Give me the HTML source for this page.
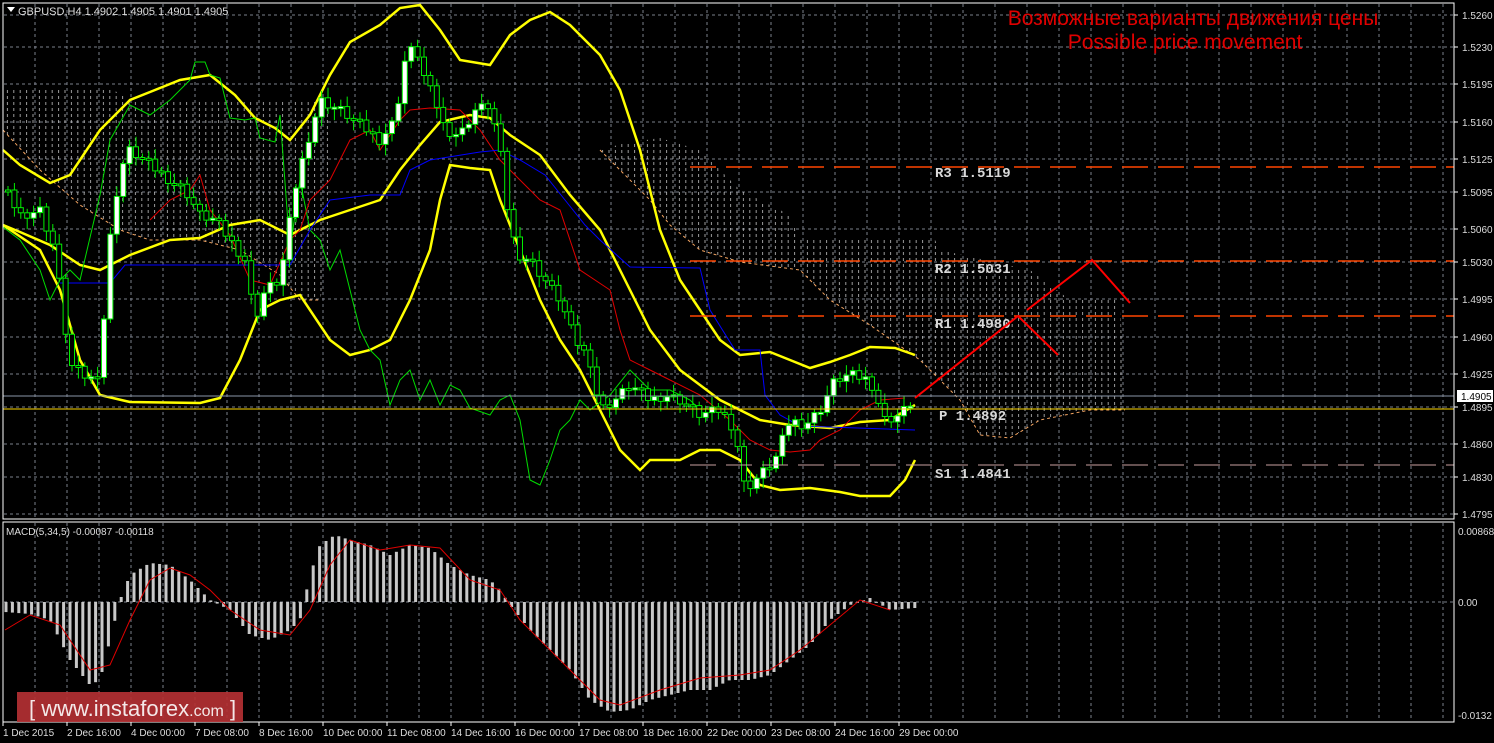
<!DOCTYPE html>
<html><head><meta charset="utf-8"><style>
html,body{margin:0;padding:0;background:#000;width:1494px;height:743px;overflow:hidden}
svg{display:block}
</style></head><body>
<svg id="s" width="1494" height="743" xmlns="http://www.w3.org/2000/svg" font-family="Liberation Sans, sans-serif">
<defs>
<pattern id="hatch" width="6.4" height="6" patternUnits="userSpaceOnUse">
<line x1="1" y1="0" x2="1" y2="3" stroke="#cfcfcf" stroke-width="1"/>
</pattern>
</defs>
<rect width="1494" height="743" fill="#000"/>
<g id="grid"></g>
<path d="M3,88 L110,88 L130,100 L330,100 L330,255 L320,300 L300,300 L280,275 L240,250 L200,240 L150,240 L120,230 L80,205 L40,170 L3,130 Z" fill="url(#hatch)" opacity="0.75"/>
<path d="M600,150 L625,143 L660,138 L700,150 L740,190 L790,215 L800,240 L935,240 L940,250 L1030,270 L1070,300 L1120,300 L1125,410 L1090,410 L1040,420 L1010,438 L980,435 L960,400 L920,360 L870,325 L830,300 L800,270 L740,262 L700,250 L670,225 L650,200 L620,170 Z" fill="url(#hatch)" opacity="0.75"/>
<polyline points="3,130 40,170 80,205 120,230 150,240 200,240 240,250 280,275 300,300 320,300" fill="none" stroke="#f4a460" stroke-width="1" stroke-dasharray="3,3"/>
<polyline points="600,150 620,170 650,200 670,225 700,250 740,262 800,270 830,300 870,325 920,360 960,400 980,435 1010,438 1040,420 1090,410 1125,410" fill="none" stroke="#f4a460" stroke-width="1" stroke-dasharray="3,3"/>
<g id="lines"></g>
<line x1="3" y1="396" x2="1454" y2="396" stroke="#8a96a8" stroke-width="1"/>
<line x1="3" y1="409" x2="1454" y2="409" stroke="#ffd700" stroke-width="1"/>
<line x1="690" y1="167" x2="1454" y2="167" stroke="#ff4500" stroke-width="1.5" stroke-dasharray="26,10"/>
<line x1="690" y1="261" x2="1454" y2="261" stroke="#ff4500" stroke-width="1.5" stroke-dasharray="26,10"/>
<line x1="690" y1="316" x2="1454" y2="316" stroke="#ff4500" stroke-width="1.5" stroke-dasharray="26,10"/>
<line x1="690" y1="465" x2="1454" y2="465" stroke="#c8a0a0" stroke-width="1" stroke-dasharray="26,10"/>
<g style="font-family:'Liberation Mono',monospace" font-size="14" font-weight="bold" fill="#d8d8d8">
<text x="935" y="177">R3 1.5119</text>
<text x="935" y="273">R2 1.5031</text>
<text x="935" y="328">R1 1.4980</text>
<text x="939" y="420">P  1.4892</text>
<text x="935" y="478">S1 1.4841</text>
</g>
<polyline points="915,398 1018,316 1058,355" fill="none" stroke="#f00" stroke-width="2"/>
<polyline points="1027,310 1092,260 1130,303" fill="none" stroke="#f00" stroke-width="2"/>
<text x="1193" y="25" text-anchor="middle" font-size="21" fill="#e00000">Возможные варианты движения цены</text>
<text x="1185" y="49" text-anchor="middle" font-size="21" fill="#e00000">Possible price movement</text>
<g id="macd"></g>
<rect x="3" y="3" width="1451" height="516" fill="none" stroke="#fff" stroke-width="1"/>
<rect x="3" y="522" width="1451" height="200" fill="none" stroke="#fff" stroke-width="1"/>
<path d="M7,7 L15,7 L11,12 Z" fill="#fff"/>
<text x="18" y="15" font-size="11" fill="#ddd">GBPUSD,H4  1.4902 1.4905 1.4901 1.4905</text>
<text x="6" y="535" font-size="10" fill="#ddd">MACD(5,34,5) -0.00087 -0.00118</text>
<g id="axis" font-size="10" fill="#ddd"></g>
<rect x="1457" y="390" width="36" height="12" fill="#fff"/>
<text x="1461" y="400" font-size="10" fill="#000">1.4905</text>
<rect x="17" y="692" width="226" height="30" fill="#b33033" opacity="0.92"/>
<text x="29" y="716" font-size="22" fill="#f4e8e8">[ www.instaforex<tspan font-size="16">.com</tspan> ]</text>
</svg>
<script>
(function(){
var NS="http://www.w3.org/2000/svg";
function el(p,t,a){var e=document.createElementNS(NS,t);for(var k in a)e.setAttribute(k,a[k]);p.appendChild(e);return e;}
var g=document.getElementById('grid');
for(var x=35;x<1454;x+=32){el(g,'line',{x1:x,y1:4,x2:x,y2:518,stroke:'#7a7f8a','stroke-dasharray':'3,3'});el(g,'line',{x1:x,y1:523,x2:x,y2:721,stroke:'#7a7f8a','stroke-dasharray':'3,3'});}
var pr=[[15,'1.5260'],[47,'1.5230'],[84,'1.5195'],[122,'1.5160'],[159,'1.5125'],[192,'1.5095'],[229,'1.5060'],[262,'1.5030'],[299,'1.4995'],[337,'1.4960'],[374,'1.4925'],[407,'1.4895'],[444,'1.4860'],[477,'1.4830'],[514,'1.4795']];
var ax=document.getElementById('axis');
pr.forEach(function(p){el(g,'line',{x1:4,y1:p[0],x2:1453,y2:p[0],stroke:'#7a7f8a','stroke-dasharray':'3,3'});el(ax,'line',{x1:1454,y1:p[0],x2:1458,y2:p[0],stroke:'#fff'});var t=el(ax,'text',{x:1462,y:p[0]+4});t.textContent=p[1];});
el(g,'line',{x1:4,y1:602,x2:1453,y2:602,stroke:'#7a7f8a','stroke-dasharray':'3,3'});
[[531,'0.00868'],[602,'0.00'],[715,'-0.0132']].forEach(function(p){var t=el(ax,'text',{x:1458,y:p[0]+4});t.textContent=p[1];});
var d=['1 Dec 2015','2 Dec 16:00','4 Dec 00:00','7 Dec 08:00','8 Dec 16:00','10 Dec 00:00','11 Dec 08:00','14 Dec 16:00','16 Dec 00:00','17 Dec 08:00','18 Dec 16:00','22 Dec 00:00','23 Dec 08:00','24 Dec 16:00','29 Dec 00:00'];
d.forEach(function(s,i){var x=3+i*64;el(ax,'line',{x1:x,y1:722,x2:x,y2:726,stroke:'#fff'});var t=el(ax,'text',{x:x,y:736});t.textContent=s;});
function interp(pts,x){for(var i=0;i<pts.length-1;i++){if(x>=pts[i][0]&&x<=pts[i+1][0]){var a=pts[i],b=pts[i+1];return a[1]+(b[1]-a[1])*(x-a[0])/(b[0]-a[0]);}}return pts[pts.length-1][1];}
var L=document.getElementById('lines');
function pl(pts,c,w){el(L,'polyline',{points:pts.map(function(p){return p.join(',')}).join(' '),fill:'none',stroke:c,'stroke-width':w});}
pl([[3,150],[20,165],[50,183],[70,175],[100,130],[130,100],[150,92],[180,80],[210,75],[235,95],[255,118],[275,128],[290,140],[310,115],[330,75],[350,42],[380,25],[400,8],[420,5],[440,30],[460,60],[490,65],[510,35],[530,20],[550,12],[570,25],[600,55],[620,90],[640,150],[660,230],[680,280],[700,310],[720,340],[740,355],[770,352],[790,360],[810,368],[830,362],[850,355],[870,347],[895,348],[915,355]],'#ffff00',2.5);
pl([[3,225],[40,250],[60,290],[80,360],[100,395],[130,402],[200,403],[220,398],[240,360],[260,310],[280,300],[300,295],[330,340],[350,355],[370,350],[390,340],[410,300],[430,250],[440,200],[450,165],[470,168],[490,170],[500,200],[520,250],[540,300],[560,340],[580,370],[600,410],[620,450],[640,470],[650,460],[680,460],[700,450],[720,450],[740,460],[760,485],[780,490],[810,488],[840,492],[860,496],[890,496],[905,480],[915,460]],'#ffff00',2.5);
pl([[3,225],[20,232],[50,245],[80,265],[100,270],[130,255],[170,240],[200,238],[230,225],[260,220],[290,235],[320,220],[350,210],[380,200],[400,170],[420,145],[440,122],[470,115],[490,118],[510,135],[540,155],[570,195],[600,230],[620,270],[650,330],[680,370],[720,400],[760,420],[790,425],[830,428],[860,422],[890,420],[915,405]],'#ffff00',2.5);
pl([[3,227],[20,240],[40,270],[50,300],[60,280],[70,270],[80,280],[100,195],[110,140],[130,105],[150,115],[170,100],[190,80],[195,62],[205,62],[210,75],[220,78],[230,118],[245,120],[255,118],[260,138],[275,142],[280,115],[290,250],[300,180],[310,230],[320,240],[330,270],[340,250],[350,290],[360,330],[370,350],[380,360],[390,405],[400,380],[410,370],[420,400],[430,380],[440,405],[450,385],[460,390],[470,408],[490,415],[500,400],[510,395],[520,420],[530,480],[540,485],[550,460],[560,430],[570,420],[580,400],[590,410],[610,395],[630,370],[650,390],[670,390],[690,400],[700,410]],'#00dd00',1);
pl([[150,220],[170,200],[190,190],[200,175],[210,210],[230,235],[250,280],[270,285],[290,240],[300,230],[310,200],[330,180],[350,140],[370,130],[380,150],[400,120],[410,110],[430,108],[460,110],[480,130],[500,160],[520,180],[540,200],[560,210],[580,270],[610,290],[620,330],[630,360],[650,370],[670,380],[700,395],[730,420],[750,440],[770,450],[790,452],[810,450],[820,440],[840,430],[860,410],[880,400],[905,398]],'#e00000',1);
pl([[60,283],[110,283],[125,265],[290,265],[310,230],[330,200],[370,195],[400,195],[410,170],[430,160],[480,152],[500,150],[520,160],[545,175],[565,200],[585,225],[600,240],[630,267],[700,268],[710,310],[735,350],[760,350],[765,395],[780,415],[800,426],[915,430]],'#0000ff',1);
var P=[[5,190],[20,215],[40,210],[55,250],[70,365],[90,380],[100,370],[110,240],[120,170],[130,150],[150,165],[170,180],[185,190],[200,215],[215,220],[230,240],[245,260],[255,320],[265,290],[280,280],[295,190],[305,150],[320,100],[340,110],[360,125],[380,140],[395,120],[405,60],[415,45],[425,80],[435,100],[445,130],[460,135],[475,110],[490,105],[500,150],[510,230],[520,255],[530,260],[545,280],[560,300],[575,340],[590,360],[600,410],[615,400],[630,385],[650,400],[665,395],[680,400],[700,415],[720,410],[735,430],[745,490],[760,475],[775,460],[790,420],[805,425],[820,410],[835,380],[850,375],[870,380],[885,420],[900,415],[915,398]];
var prev=interp(P,5);
for(var i=0;i<142;i++){var cx=8+i*6.4;var c=interp(P,cx)+((i*7)%11-5);var o=prev;var t1=Math.min(o,c),b1=Math.max(o,c);if(b1-t1<2)b1=t1+2;
el(L,'line',{x1:cx,y1:t1-4-((i*3)%9),x2:cx,y2:b1+4+((i*5)%8),stroke:'#00ee00','stroke-width':1});
el(L,'rect',{x:cx-2.5,y:t1,width:5,height:b1-t1,fill:(c<o?'#fff':'#000'),stroke:'#00ee00','stroke-width':1});prev=c;}
var M=document.getElementById('macd');
var H=[[5,612],[30,614],[50,620],[70,660],[90,685],[100,680],[110,640],[120,600],[130,575],[150,563],[170,565],[190,580],[210,600],[230,610],[250,635],[270,640],[290,630],[300,620],[310,575],[320,545],[335,535],[350,540],[370,545],[390,555],[410,545],[430,548],[450,565],[470,575],[490,580],[500,590],[510,605],[530,630],[550,650],[570,670],[590,700],[610,712],[630,710],[650,700],[670,695],[690,690],[710,690],[730,680],[750,680],[770,675],[790,660],[810,645],[830,620],[850,605],[870,598],[890,610],[915,608]];
for(var j=0;j<143;j++){var mx=6+j*6.4;var y=interp(H,mx);el(M,'rect',{x:mx-1.5,y:Math.min(y,602),width:3,height:Math.max(1,Math.abs(y-602)),fill:'#c8c8c8'});}
var S=[[5,630],[30,615],[60,625],[90,670],[110,665],[130,620],[150,580],[170,568],[190,575],[210,590],[230,610],[260,630],[290,635],[310,610],[330,565],[350,540],[380,550],[410,545],[440,548],[470,580],[500,590],[520,620],[560,660],[600,700],[620,705],[660,690],[700,678],[740,675],[770,670],[800,650],[830,625],[860,600],[890,610]];
el(M,'polyline',{points:S.map(function(p){return p.join(',')}).join(' '),fill:'none',stroke:'#e00000','stroke-width':1});
})();
</script>
</body></html>
